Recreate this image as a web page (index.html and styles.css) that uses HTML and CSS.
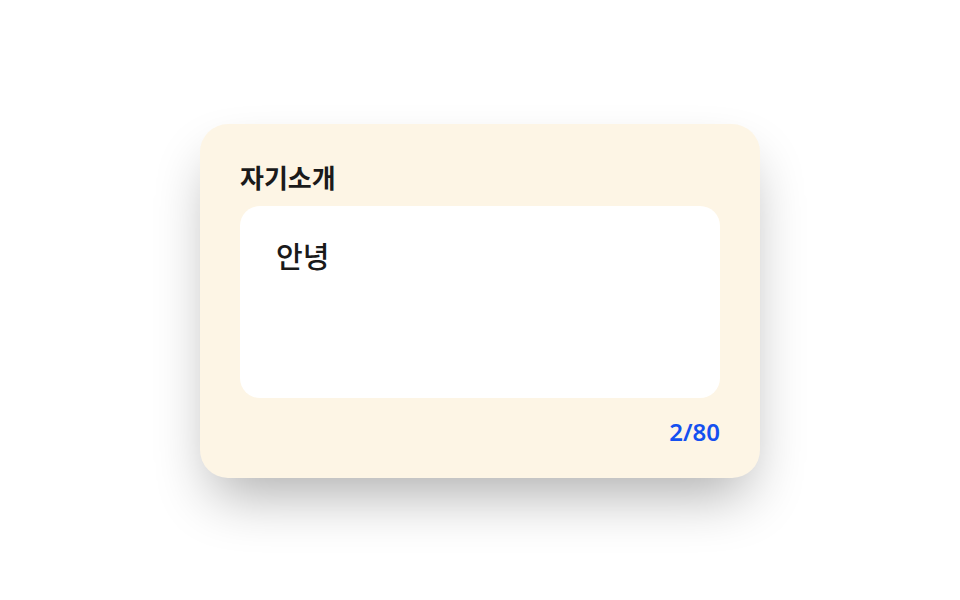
FILE: index.html
```html
<!DOCTYPE html>
<html lang="ko">
<head>
    <meta charset="UTF-8">
    <meta name="viewport" content="width=device-width, initial-scale=1.0">
    <title>자기소개</title>
    <link rel="stylesheet" href="styles.css">
</head>
<body>
    <div class="card">
        <label class="field-label" for="introInput">자기소개</label>
        <textarea id="introInput" class="intro-input" maxlength="80">안녕</textarea>
        <div class="counter"><span id="charCount">2</span>/80</div>
    </div>
</body>
</html>
```

FILE: styles.css
```css
body {
    margin: 0;
    padding-top: 2px;
    min-height: calc(100vh - 2px);
    display: flex;
    align-items: center;
    justify-content: center;
    background: #fff;
    font-family: 'Noto Sans', 'Noto Sans CJK KR', sans-serif;
}

.card {
    width: 560px;
    box-sizing: border-box;
    padding: 36px 40px 30px;
    background: #fdf5e5;
    border-radius: 28px;
    box-shadow: 0 28px 56px -12px rgba(0, 0, 0, 0.32);
    display: flex;
    flex-direction: column;
}

.field-label {
    font-size: 26px;
    line-height: 36px;
    font-weight: 700;
    color: #1a1a1a;
    margin-bottom: 10px;
}

.intro-input {
    height: 192px;
    box-sizing: border-box;
    padding: 31px 36px 20px;
    border: none;
    border-radius: 20px;
    background: #fff;
    font-family: inherit;
    font-size: 29px;
    line-height: 40px;
    font-weight: 500;
    color: #1a1a1a;
    resize: none;
    outline: none;
}

.counter {
    margin-top: 18px;
    text-align: right;
    font-size: 24px;
    line-height: 32px;
    font-weight: 600;
    color: #1450f0;
}
```
